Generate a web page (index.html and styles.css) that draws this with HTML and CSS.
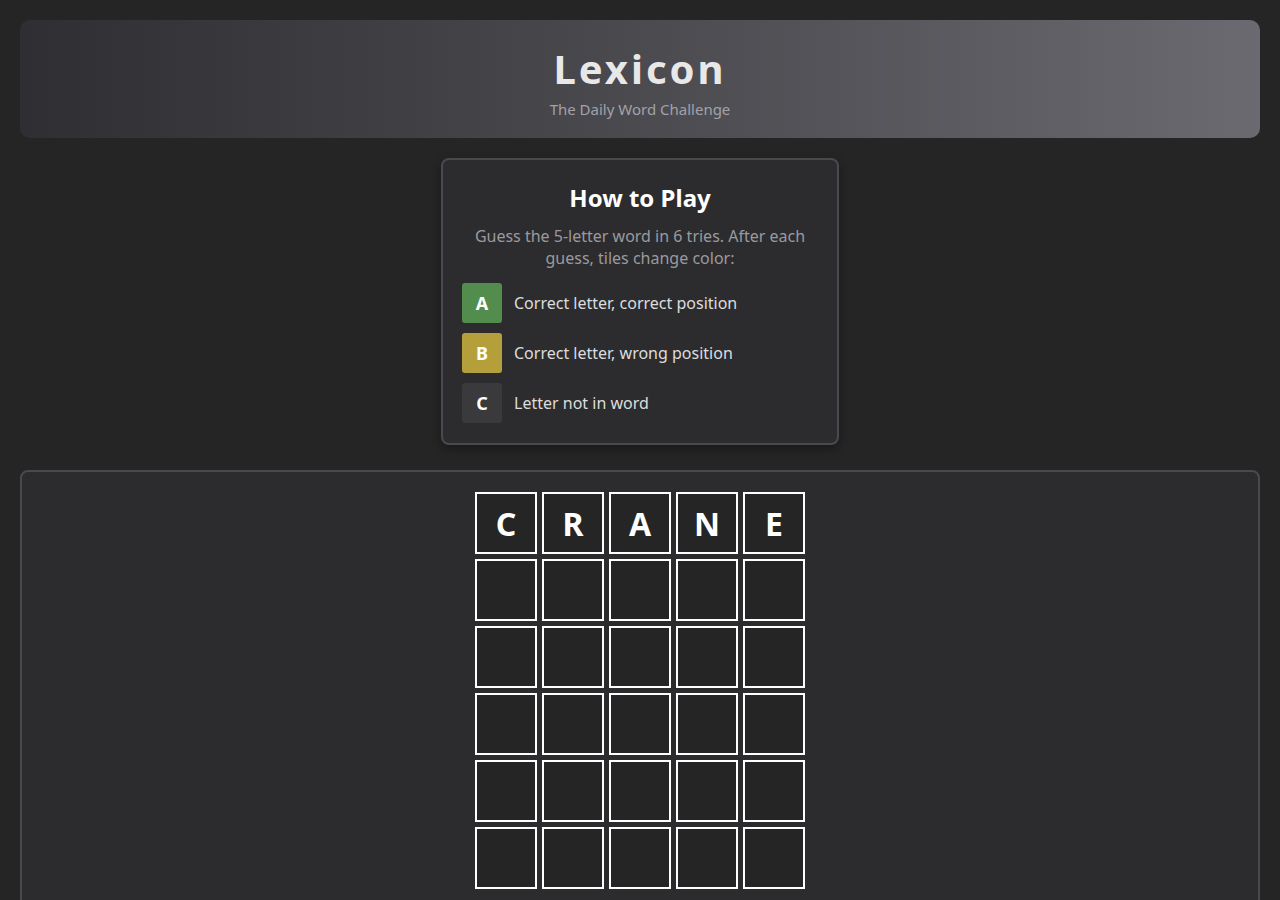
FILE: index.html
```html
<!DOCTYPE html>
<html lang="en">
<head>
<meta charset="utf-8">
<title>Lexicon</title>
<link rel="stylesheet" href="styles.css">
</head>
<body>
<div class="page">
  <header class="header">
    <h1 class="title">Lexicon</h1>
    <p class="subtitle">The Daily Word Challenge</p>
  </header>

  <section class="howto">
    <h2 class="howto-title">How to Play</h2>
    <p class="howto-desc">Guess the 5-letter word in 6 tries. After each guess, tiles change color:</p>
    <ul class="legend">
      <li class="legend-item"><span class="chip chip-correct">A</span><span>Correct letter, correct position</span></li>
      <li class="legend-item"><span class="chip chip-present">B</span><span>Correct letter, wrong position</span></li>
      <li class="legend-item"><span class="chip chip-absent">C</span><span>Letter not in word</span></li>
    </ul>
  </section>

  <main class="board-wrap">
    <div class="board">
      <div class="tile">C</div><div class="tile">R</div><div class="tile">A</div><div class="tile">N</div><div class="tile">E</div>
      <div class="tile"></div><div class="tile"></div><div class="tile"></div><div class="tile"></div><div class="tile"></div>
      <div class="tile"></div><div class="tile"></div><div class="tile"></div><div class="tile"></div><div class="tile"></div>
      <div class="tile"></div><div class="tile"></div><div class="tile"></div><div class="tile"></div><div class="tile"></div>
      <div class="tile"></div><div class="tile"></div><div class="tile"></div><div class="tile"></div><div class="tile"></div>
      <div class="tile"></div><div class="tile"></div><div class="tile"></div><div class="tile"></div><div class="tile"></div>
    </div>
  </main>
</div>
</body>
</html>
```

FILE: styles.css
```css
* { box-sizing: border-box; }
html, body { margin: 0; padding: 0; }
body {
  background: #252525;
  font-family: "Noto Sans", "Open Sans", sans-serif;
  color: #e6e6e6;
}
.page {
  padding: 20px;
  display: flex;
  flex-direction: column;
  align-items: center;
}
.header {
  width: 100%;
  height: 118px;
  border-radius: 10px;
  background: linear-gradient(90deg, #2f2f33 0%, #48474c 45%, #6b6a70 100%);
  display: flex;
  flex-direction: column;
  align-items: center;
  padding-top: 25px;
}
.title {
  margin: 0;
  font-size: 40px;
  line-height: 48px;
  font-weight: 700;
  letter-spacing: 3px;
  color: #e8e8e8;
}
.subtitle {
  margin: 6px 0 0;
  font-size: 15px;
  line-height: 21px;
  color: #a2a2aa;
}
.howto {
  width: 398px;
  margin: 20px 0 25px;
  background: #2c2c2f;
  border: 2px solid #4a4a4e;
  border-radius: 8px;
  padding: 22px 19px 20px;
  box-shadow: 0 4px 10px rgba(0,0,0,0.35);
  text-align: center;
}
.howto-title {
  margin: 0;
  font-size: 24px;
  line-height: 32px;
  font-weight: 700;
  color: #ffffff;
}
.howto-desc {
  margin: 11px 0 14px;
  font-size: 16px;
  line-height: 22px;
  color: #9a9a9e;
}
.legend {
  list-style: none;
  margin: 0;
  padding: 0;
  display: flex;
  flex-direction: column;
  gap: 10px;
}
.legend-item {
  display: flex;
  align-items: center;
  gap: 12px;
  font-size: 16px;
  color: #dddddd;
  text-align: left;
}
.chip {
  width: 40px;
  height: 40px;
  border-radius: 3px;
  display: flex;
  align-items: center;
  justify-content: center;
  font-weight: 700;
  font-size: 18px;
  color: #ffffff;
  flex: none;
}
.chip-correct { background: #538d4e; }
.chip-present { background: #b59f3b; }
.chip-absent { background: #3a3a3c; }
.board-wrap {
  width: 100%;
  background: #2c2c2e;
  border: 2px solid #4a4a4e;
  border-radius: 8px;
  padding: 20px 0 40px;
  display: flex;
  justify-content: center;
}
.board {
  display: grid;
  grid-template-columns: repeat(5, 62px);
  grid-auto-rows: 62px;
  gap: 5px;
}
.tile {
  border: 2px solid #ffffff;
  background: #252525;
  display: flex;
  align-items: center;
  justify-content: center;
  font-size: 32px;
  font-weight: 700;
  color: #ffffff;
}
```
